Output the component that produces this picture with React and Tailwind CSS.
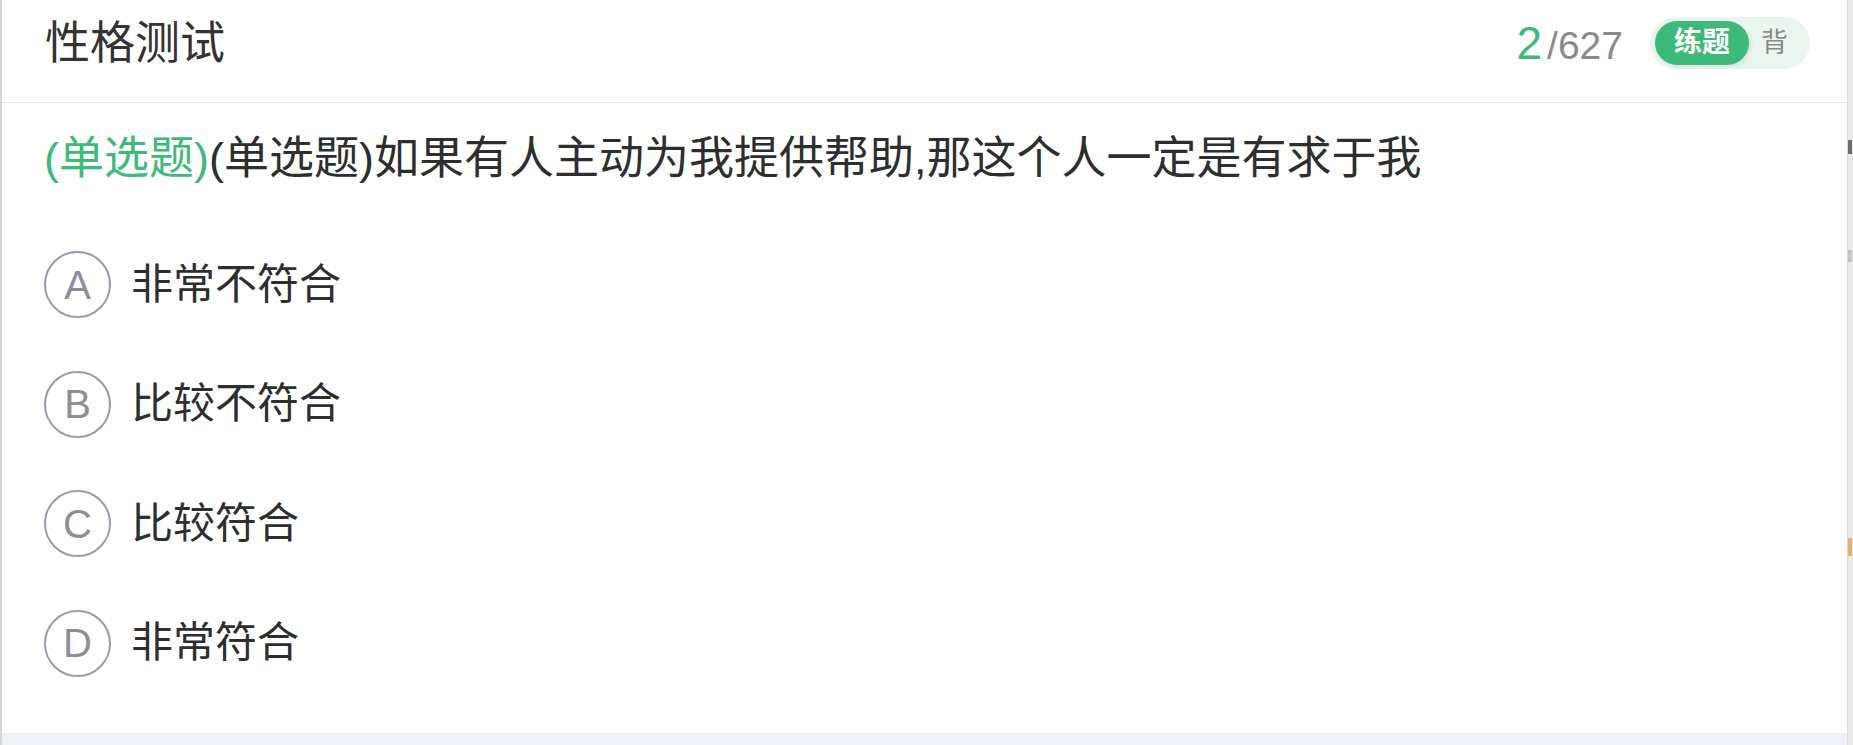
import React from "react";

const options = [
  { key: "A", text: "非常不符合" },
  { key: "B", text: "比较不符合" },
  { key: "C", text: "比较符合" },
  { key: "D", text: "非常符合" },
];

const FONT = { fontFamily: '"Liberation Sans", "Noto Sans CJK SC", sans-serif' };

export default function App() {
  return (
    <div className="flex w-[1853px] h-[745px] bg-white overflow-hidden" style={FONT}>
      <div className="flex flex-col flex-1 border-l-2 border-[#d6d6d6]">
        <div className="flex flex-col flex-1 bg-white">
          <div className="h-[103px] flex items-center justify-between pb-[16px] pl-[43px] pr-[37px] border-b border-[#e8e8e8]">
            <div className="text-[45px] leading-none text-[#333333]">性格测试</div>
            <div className="flex items-center">
              <div className="flex items-baseline">
                <span className="text-[46px] leading-none text-[#3dba7a]">2</span>
                <span className="text-[39px] leading-none text-[#8a8a8a] ml-[5px]">/627</span>
              </div>
              <div className="ml-[27px] flex items-center h-[52px] w-[160px] rounded-full bg-[#e9f6ef] pl-[5px] pr-[22px] justify-between">
                <div className="flex items-center justify-center h-[44px] w-[94px] rounded-full bg-[#3dba7a] text-white font-bold text-[28px] shadow-[2px_2px_4px_rgba(0,0,0,0.08)]">
                  练题
                </div>
                <span className="text-[27px] text-[#8a8a8a]">背</span>
              </div>
            </div>
          </div>
          <div className="flex flex-col pl-[42px] pt-[26px]">
            <div className="text-[45px] leading-[60px] text-[#2e2e2e] whitespace-nowrap">
              <span className="text-[#3dba7a]">(单选题)</span>(单选题)如果有人主动为我提供帮助,那这个人一定是有求于我
            </div>
            <div className="flex flex-col mt-[36px]">
              {options.map((o) => (
                <div key={o.key} className="h-[119.5px] flex items-center">
                  <div className="w-[67px] h-[67px] rounded-full border-2 border-[#9b9baa] flex items-center justify-center text-[40px] text-[#8d8d9e] leading-none">
                    {o.key}
                  </div>
                  <div className="ml-[20px] text-[42px] text-[#2e2e2e] leading-none">{o.text}</div>
                </div>
              ))}
            </div>
          </div>
        </div>
        <div className="h-[12px] bg-[#eef1f5]" />
      </div>
      <div className="w-[6px] bg-[#e9e9e9] border-l border-[#dcdcdc] flex flex-col">
        <div className="mt-[140px] h-[14px] w-[4px] bg-[#6a6e78]" />
        <div className="mt-[96px] h-[12px] w-[4px] bg-[#c0c2ca]" />
        <div className="mt-[276px] h-[18px] w-[4px] bg-[#eab070]" />
      </div>
    </div>
  );
}
